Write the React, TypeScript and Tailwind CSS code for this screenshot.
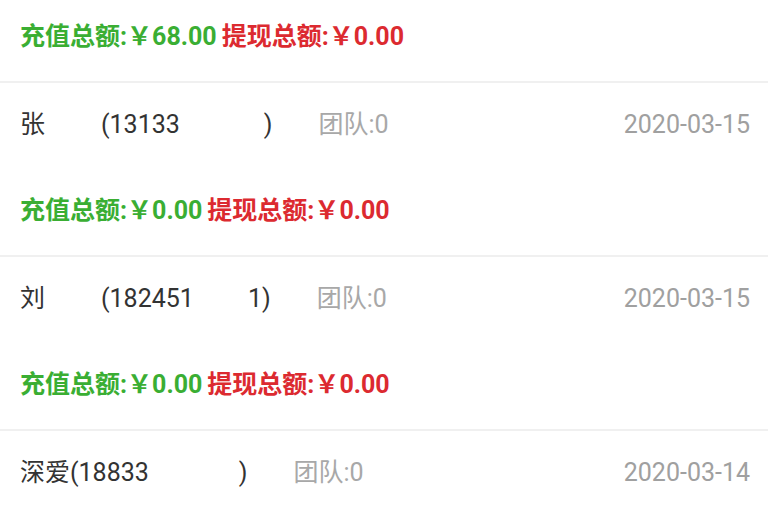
// 团队成员列表 — 每一项：成员行（姓名/手机号、团队人数、日期）+ 充值/提现汇总行。
// 姓名和手机号中间有被抹掉的部分，用空白占位表示。
type Piece = string | number;

type Member = {
  name: Piece[];
  team: number;
  date: string;
  recharge: string;
  withdraw: string;
};

const members: Member[] = [
  { name: ["张", 56, "(13133", 84, ")"], team: 0, date: "2020-03-15", recharge: "0.00", withdraw: "0.00" },
  { name: ["刘", 56, "(182451", 54, "1)"], team: 0, date: "2020-03-15", recharge: "0.00", withdraw: "0.00" },
  { name: ["深爱(18833", 90, ")"], team: 0, date: "2020-03-14", recharge: "0.00", withdraw: "0.00" },
];

const font = { fontFamily: 'Roboto, "Noto Sans CJK SC", sans-serif' };

function Summary({ recharge, withdraw }: { recharge: string; withdraw: string }) {
  return (
    <div className="flex h-[88px] items-center px-[20px] text-[25px] font-bold">
      <span className="text-[#3aae33]">充值总额:￥{recharge}</span>
      <span className="ml-[5px] text-[#dc2a30]">提现总额:￥{withdraw}</span>
    </div>
  );
}

function MemberRow({ m }: { m: Member }) {
  return (
    <div className="flex h-[84px] items-center justify-between pl-[20px] pr-[18px] text-[25px]">
      <div className="flex items-center gap-[46px]">
        <span className="flex items-center text-[#333333]">
          {m.name.map((p, i) =>
            typeof p === "number" ? (
              <span key={i} className="inline-block" style={{ width: p }} />
            ) : (
              <span key={i}>{p}</span>
            )
          )}
        </span>
        <span className="text-[#a8a8a8]">团队:{m.team}</span>
      </div>
      <span className="text-[#a0a0a0]">{m.date}</span>
    </div>
  );
}

export default function App() {
  return (
    <div className="h-[510px] w-[768px] overflow-hidden bg-white" style={font}>
      <div className="-mt-[7px]">
        <Summary recharge="68.00" withdraw="0.00" />
        {members.map((m, i) => (
          <div key={i}>
            <div className="h-[2px] bg-[#f0f0f0]" />
            <MemberRow m={m} />
            {i < members.length - 1 && (
              <Summary recharge={m.recharge} withdraw={m.withdraw} />
            )}
          </div>
        ))}
      </div>
    </div>
  );
}
